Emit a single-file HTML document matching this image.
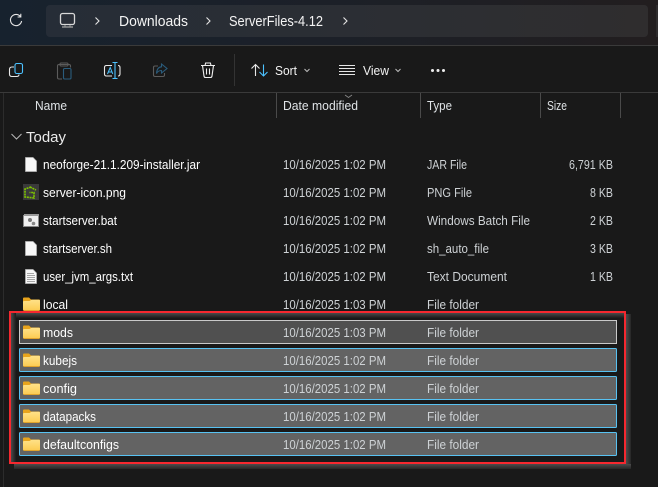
<!DOCTYPE html>
<html><head><meta charset="utf-8"><style>
html,body{margin:0;padding:0;background:#191919;width:658px;height:487px;overflow:hidden}
svg{display:block}
text{font-family:"Liberation Sans",sans-serif;font-size:12.5px;fill:#fff}
.d{fill:#ced2d5}
.h{fill:#dfe3e6}
.a{font-size:14.5px;fill:#f4f4f4}
.t{fill:#f2f2f2;font-size:12.5px}
</style></head><body>
<svg width="658" height="487" viewBox="0 0 658 487" xmlns="http://www.w3.org/2000/svg">
<defs>
<linearGradient id="top" x1="0" x2="1" y1="0" y2="0"><stop offset="0" stop-color="#17222e"/><stop offset=".5" stop-color="#1c2028"/><stop offset="1" stop-color="#221e1f"/></linearGradient>
<linearGradient id="addr" x1="0" x2="1" y1="0" y2="0"><stop offset="0" stop-color="#262d37"/><stop offset=".6" stop-color="#2c2e33"/><stop offset="1" stop-color="#2f2d2e"/></linearGradient>
<linearGradient id="fold" x1="0" x2="0" y1="0" y2="1"><stop offset="0" stop-color="#ffe289"/><stop offset="1" stop-color="#fccb52"/></linearGradient>
<linearGradient id="sR" x1="0" x2="1" y1="0" y2="0"><stop offset="0" stop-color="#4c4c4c"/><stop offset="1" stop-color="#262626"/></linearGradient>
<linearGradient id="sB" x1="0" x2="0" y1="0" y2="1"><stop offset="0" stop-color="#4c4c4c"/><stop offset="1" stop-color="#262626"/></linearGradient>
<linearGradient id="iL" x1="0" x2="1" y1="0" y2="0"><stop offset="0" stop-color="#4a4a4a"/><stop offset="1" stop-color="#1b1b1b"/></linearGradient>
<linearGradient id="iT" x1="0" x2="0" y1="0" y2="1"><stop offset="0" stop-color="#4a4a4a"/><stop offset="1" stop-color="#1b1b1b"/></linearGradient>
<symbol id="folder" viewBox="0 0 17 14" width="17" height="14">
<path d="M0 1.5Q0 .5 1 .5H6L8 2.5H16Q17 2.5 17 3.5V6H0Z" fill="#e8a41c"/>
<path d="M0 5Q0 4 1 4H6.5L8.5 2.8H16Q17 2.8 17 3.8V12.5Q17 13.5 16 13.5H1Q0 13.5 0 12.5Z" fill="url(#fold)"/>
<path d="M.5 13.5H16.5" stroke="#e0a32c" stroke-width="1"/>
</symbol>
<symbol id="doc" viewBox="0 0 12 15" width="12" height="15">
<path d="M.5.5H8L11.5 4V14.5H.5Z" fill="#f7f7f7" stroke="#b9b9b9" stroke-width=".7"/>
</symbol>
</defs>
<rect width="658" height="487" fill="#191919"/>
<rect width="658" height="45" fill="url(#top)"/>
<rect y="45" width="658" height="1" fill="#3a3a3a"/>
<rect x="46" y="5" width="602" height="32" rx="4" fill="url(#addr)"/>
<rect x="656" y="5" width="2" height="32" fill="#2e2c2d"/>
<!-- refresh -->
<path d="M20.5 16.6A5.6 5.6 0 1 0 21.6 21M20.8 13.8V17H17.6" fill="none" stroke="#e6e6e6" stroke-width="1.1"/>
<!-- monitor -->
<rect x="60.5" y="13.5" width="14" height="11" rx="2" fill="#2a2f38" stroke="#d8d8d8" stroke-width="1.3"/>
<path d="M62 27H73" stroke="#9a9a9a" stroke-width="1.4"/>
<path d="M65 25V26.5M70 25V26.5" stroke="#9a9a9a"/>
<g fill="none" stroke="#e4e4e4" stroke-width="1.1">
<path d="M95.5 17.5L99 21L95.5 24.5"/>
<path d="M206.5 17.5L210 21L206.5 24.5"/>
<path d="M343.5 17.5L347 21L343.5 24.5"/>
</g>
<text class="a" x="119" y="26" textLength="69" lengthAdjust="spacingAndGlyphs">Downloads</text>
<text class="a" x="229" y="26" textLength="94" lengthAdjust="spacingAndGlyphs">ServerFiles-4.12</text>
<rect y="92" width="658" height="1" fill="#3a3a3a"/>
<!-- copy -->
<path d="M14 67H12Q9.5 67 9.5 69.5V74Q9.5 76.5 12 76.5H16.5Q19 76.5 19 74.5" fill="none" stroke="#e8e8e8" stroke-width="1.1"/>
<rect x="15" y="63.5" width="7.5" height="10" rx="1.8" fill="none" stroke="#4cc2ff" stroke-width="1.1"/>
<!-- paste -->
<path d="M62 79H59Q57.5 79 57.5 77.5V66Q57.5 64.5 59 64.5H69Q70.5 64.5 70.5 66V67.5" fill="none" stroke="#5c5c5c" stroke-width="1.1"/>
<rect x="60" y="63" width="8" height="3" rx="1" fill="none" stroke="#5c5c5c"/>
<rect x="63.5" y="68.5" width="7.5" height="10.5" rx="1.2" fill="none" stroke="#2a5c7c" stroke-width="1.1"/>
<!-- rename -->
<path d="M112 65.5H106.5Q104.5 65.5 104.5 67.5V74Q104.5 76 106.5 76H112M118 65.5Q120 65.5 120 67.5V74Q120 76 118 76" fill="none" stroke="#e8e8e8" stroke-width="1.1"/>
<path d="M112.5 62.5H117.5M115 62.5V78.5M112.5 78.5H117.5" fill="none" stroke="#4cc2ff" stroke-width="1.1"/>
<path d="M107.5 74L110.2 67.5L112.8 74M108.5 72H112" fill="none" stroke="#4cc2ff" stroke-width="1"/>
<!-- share -->
<path d="M158 66H155Q153.5 66 153.5 67.5V75Q153.5 76.5 155 76.5H163Q164.5 76.5 164.5 75V73" fill="none" stroke="#5c5c5c" stroke-width="1.1"/>
<path d="M161.5 64L167 68.5L161.5 73V70.5Q158 70.5 156.5 73.5Q157 67 161.5 66.8Z" fill="none" stroke="#2a5c7c" stroke-width="1.1"/>
<!-- delete -->
<path d="M201 65.5H215M205 65.5L205.6 63H210.4L211 65.5M202.5 65.5L204 76Q204.2 77.5 205.6 77.5H210.4Q211.8 77.5 212 76L213.5 65.5M206.5 68.5V74.5M209.5 68.5V74.5" fill="none" stroke="#eeeeee" stroke-width="1.1"/>
<rect x="234" y="54" width="1" height="32" fill="#333"/>
<!-- sort -->
<path d="M251.5 68.5L255.5 64.5L259.5 68.5M255.5 65V76" fill="none" stroke="#e8e8e8" stroke-width="1.1"/>
<path d="M259.5 72L263.5 76L267.5 72M263.5 64.5V75.5" fill="none" stroke="#4cc2ff" stroke-width="1.1"/>
<text class="t" x="275" y="75" textLength="22" lengthAdjust="spacingAndGlyphs">Sort</text>
<path d="M304.5 69L307 71.5L309.5 69" fill="none" stroke="#bdbdbd"/>
<!-- view -->
<path d="M339 65.5H355M339 68.5H355M339 71.5H355M339 74.5H355" stroke="#e6e6e6" stroke-width="1"/>
<text class="t" x="363" y="75" textLength="26" lengthAdjust="spacingAndGlyphs">View</text>
<path d="M395.5 69L398 71.5L400.5 69" fill="none" stroke="#bdbdbd"/>
<circle cx="432.5" cy="70.5" r="1.5" fill="#eee"/><circle cx="438" cy="70.5" r="1.5" fill="#eee"/><circle cx="443.5" cy="70.5" r="1.5" fill="#eee"/>
<!-- headers -->
<rect x="3" y="93" width="1" height="394" fill="#2c2c2c"/>
<g fill="#4a4a4a"><rect x="276" y="93" width="1" height="25"/><rect x="420" y="93" width="1" height="25"/><rect x="540" y="93" width="1" height="25"/><rect x="620" y="93" width="1" height="25"/></g>
<path d="M345 95L348.5 97.5L352 95" fill="none" stroke="#8a8a8a" stroke-width=".8"/>
<text class="h" x="35" y="110" textLength="32" lengthAdjust="spacingAndGlyphs">Name</text>
<text class="h" x="283" y="110" textLength="75" lengthAdjust="spacingAndGlyphs">Date modified</text>
<text class="h" x="427" y="110" textLength="25" lengthAdjust="spacingAndGlyphs">Type</text>
<text class="h" x="547" y="110" textLength="20" lengthAdjust="spacingAndGlyphs">Size</text>
<!-- group -->
<path d="M11.5 134L16.5 139L21.5 134" fill="none" stroke="#b8b8b8" stroke-width="1"/>
<text x="26" y="142" style="font-size:15px;fill:#eaeaea" textLength="40" lengthAdjust="spacingAndGlyphs">Today</text>
<!-- file rows -->
<use href="#doc" x="25" y="157"/>
<text x="43" y="169" textLength="157" lengthAdjust="spacingAndGlyphs">neoforge-21.1.209-installer.jar</text>
<text class="d" x="283" y="169" textLength="103" lengthAdjust="spacingAndGlyphs">10/16/2025 1:02 PM</text>
<text class="d" x="427" y="169" textLength="40" lengthAdjust="spacingAndGlyphs">JAR File</text>
<text class="d" x="569" y="169" textLength="44" lengthAdjust="spacingAndGlyphs">6,791 KB</text>

<rect x="23" y="184" width="16" height="16" fill="#3a3a3a"/>
<path d="M31 187L25 189V197L34 198V192.5H29.5M30 187L36 190" fill="none" stroke="#7ec400" stroke-width="1.6" stroke-dasharray="2 .7"/>
<text x="43" y="197" textLength="83" lengthAdjust="spacingAndGlyphs">server-icon.png</text>
<text class="d" x="283" y="197" textLength="103" lengthAdjust="spacingAndGlyphs">10/16/2025 1:02 PM</text>
<text class="d" x="427" y="197" textLength="45" lengthAdjust="spacingAndGlyphs">PNG File</text>
<text class="d" x="590" y="197" textLength="23" lengthAdjust="spacingAndGlyphs">8 KB</text>

<rect x="23.5" y="215.5" width="15" height="11" fill="#f0f0f0" stroke="#8a8a8a"/>
<rect x="24" y="214" width="15" height="2" fill="#9a9a9a"/>
<circle cx="30" cy="220" r="2" fill="#777"/><circle cx="33.5" cy="223.5" r="1.8" fill="#888"/>
<text x="43" y="225" textLength="74" lengthAdjust="spacingAndGlyphs">startserver.bat</text>
<text class="d" x="283" y="225" textLength="103" lengthAdjust="spacingAndGlyphs">10/16/2025 1:02 PM</text>
<text class="d" x="427" y="225" textLength="103" lengthAdjust="spacingAndGlyphs">Windows Batch File</text>
<text class="d" x="590" y="225" textLength="23" lengthAdjust="spacingAndGlyphs">2 KB</text>

<use href="#doc" x="25" y="241"/>
<text x="43" y="253" textLength="69" lengthAdjust="spacingAndGlyphs">startserver.sh</text>
<text class="d" x="283" y="253" textLength="103" lengthAdjust="spacingAndGlyphs">10/16/2025 1:02 PM</text>
<text class="d" x="427" y="253" textLength="62" lengthAdjust="spacingAndGlyphs">sh_auto_file</text>
<text class="d" x="590" y="253" textLength="23" lengthAdjust="spacingAndGlyphs">3 KB</text>

<use href="#doc" x="25" y="269"/>
<path d="M27 273.5H34M27 275.5H35M27 277.5H35M27 279.5H35M27 281.5H35" stroke="#8a8a8a" stroke-width=".8"/>
<text x="43" y="281" textLength="90" lengthAdjust="spacingAndGlyphs">user_jvm_args.txt</text>
<text class="d" x="283" y="281" textLength="103" lengthAdjust="spacingAndGlyphs">10/16/2025 1:02 PM</text>
<text class="d" x="427" y="281" textLength="80" lengthAdjust="spacingAndGlyphs">Text Document</text>
<text class="d" x="590" y="281" textLength="23" lengthAdjust="spacingAndGlyphs">1 KB</text>

<use href="#folder" x="23" y="297"/>
<text x="43" y="309" textLength="25" lengthAdjust="spacingAndGlyphs">local</text>
<text class="d" x="283" y="309" textLength="103" lengthAdjust="spacingAndGlyphs">10/16/2025 1:03 PM</text>
<text class="d" x="427" y="309" textLength="52" lengthAdjust="spacingAndGlyphs">File folder</text>

<!-- highlight box -->
<rect x="11" y="313" width="613" height="149" fill="#191919"/>
<rect x="11" y="313" width="613" height="5" fill="url(#iT)"/>
<rect x="11" y="313" width="5" height="149" fill="url(#iL)"/>
<rect x="626" y="314" width="5" height="155" fill="url(#sR)"/>
<rect x="14" y="464" width="617" height="5" fill="url(#sB)"/>
<rect x="10" y="312" width="615" height="151" fill="none" stroke="#f5282f" stroke-width="2"/>

<rect x="19.5" y="320.5" width="597" height="23" fill="#505050" stroke="#c9c9c9"/>
<rect x="19.5" y="348.5" width="597" height="23" rx="1" fill="#636363" stroke="#58c2f2"/>
<rect x="19.5" y="376.5" width="597" height="23" rx="1" fill="#636363" stroke="#58c2f2"/>
<rect x="19.5" y="404.5" width="597" height="23" rx="1" fill="#636363" stroke="#58c2f2"/>
<rect x="19.5" y="432.5" width="597" height="23" rx="1" fill="#636363" stroke="#58c2f2"/>

<use href="#folder" x="23" y="325"/>
<text x="43" y="337" textLength="30" lengthAdjust="spacingAndGlyphs">mods</text>
<text class="d" x="283" y="337" textLength="103" lengthAdjust="spacingAndGlyphs">10/16/2025 1:03 PM</text>
<text class="d" x="427" y="337" textLength="52" lengthAdjust="spacingAndGlyphs">File folder</text>

<use href="#folder" x="23" y="353"/>
<text x="43" y="365" textLength="34" lengthAdjust="spacingAndGlyphs">kubejs</text>
<text class="d" x="283" y="365" textLength="103" lengthAdjust="spacingAndGlyphs">10/16/2025 1:02 PM</text>
<text class="d" x="427" y="365" textLength="52" lengthAdjust="spacingAndGlyphs">File folder</text>

<use href="#folder" x="23" y="381"/>
<text x="43" y="393" textLength="34" lengthAdjust="spacingAndGlyphs">config</text>
<text class="d" x="283" y="393" textLength="103" lengthAdjust="spacingAndGlyphs">10/16/2025 1:02 PM</text>
<text class="d" x="427" y="393" textLength="52" lengthAdjust="spacingAndGlyphs">File folder</text>

<use href="#folder" x="23" y="409"/>
<text x="43" y="421" textLength="53" lengthAdjust="spacingAndGlyphs">datapacks</text>
<text class="d" x="283" y="421" textLength="103" lengthAdjust="spacingAndGlyphs">10/16/2025 1:02 PM</text>
<text class="d" x="427" y="421" textLength="52" lengthAdjust="spacingAndGlyphs">File folder</text>

<use href="#folder" x="23" y="437"/>
<text x="43" y="449" textLength="76" lengthAdjust="spacingAndGlyphs">defaultconfigs</text>
<text class="d" x="283" y="449" textLength="103" lengthAdjust="spacingAndGlyphs">10/16/2025 1:02 PM</text>
<text class="d" x="427" y="449" textLength="52" lengthAdjust="spacingAndGlyphs">File folder</text>
</svg>
</body></html>
